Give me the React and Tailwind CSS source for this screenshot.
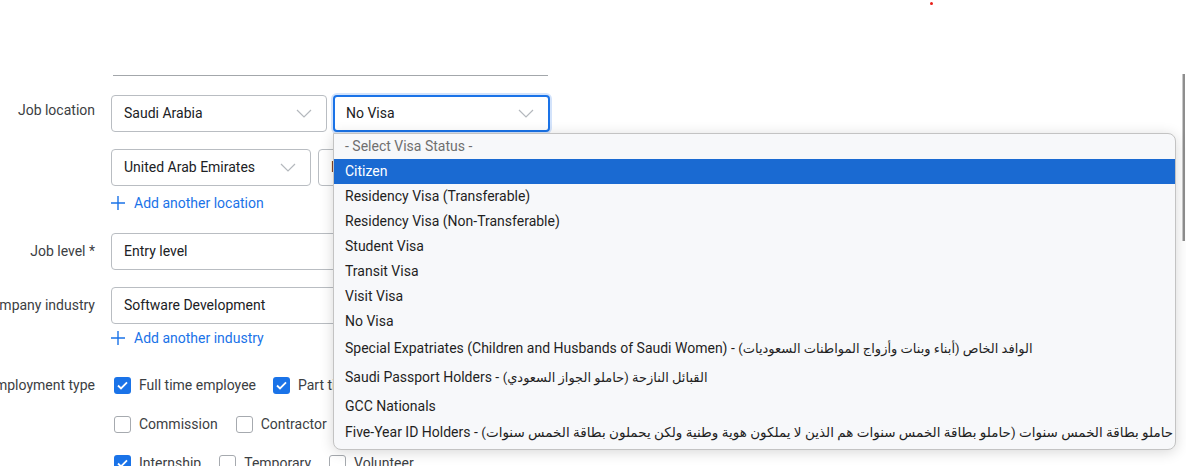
import React from "react";

function Chevron() {
  return (
    <svg width="16" height="9" viewBox="0 0 16 9" fill="none" className="shrink-0">
      <path d="M1 1l7 7 7-7" stroke="#b4b8bd" strokeWidth="1.2" />
    </svg>
  );
}

function Select({ value, w, focused }) {
  return (
    <div
      className={
        "h-[37px] flex items-center justify-between pl-3 pr-[14px] rounded-[4px] bg-white " +
        (focused
          ? "border-2 border-[#1a73e8] ring-2 ring-[#d3e3fb] pl-[11px] pr-[13px] bg-[#fafbfd]"
          : "border border-[#b9bdc2]")
      }
      style={{ width: w }}
    >
      <span className="text-[14px] text-[#202124] whitespace-nowrap">{value}</span>
      <Chevron />
    </div>
  );
}

function Input({ value }) {
  return (
    <div className="h-[37px] w-[437px] flex items-center pl-3 rounded-[4px] border border-[#b9bdc2] bg-white">
      <span className="text-[14px] text-[#202124]">{value}</span>
    </div>
  );
}

function Plus() {
  return (
    <svg width="14" height="14" viewBox="0 0 14 14" className="shrink-0">
      <path d="M7 0v14M0 7h14" stroke="#1a73e8" strokeWidth="1.4" />
    </svg>
  );
}

function AddLink({ text }) {
  return (
    <div className="flex items-center gap-[9px] h-5 text-[14px] text-[#1a73e8]">
      <Plus />
      <span>{text}</span>
    </div>
  );
}

function Checkbox({ checked, label }) {
  return (
    <div className="flex items-center gap-2">
      {checked ? (
        <div className="w-[17px] h-[17px] rounded-[3px] bg-[#1a73e8] flex items-center justify-center">
          <svg width="11" height="9" viewBox="0 0 11 9">
            <path d="M1 4.5l3 3L10 1.3" stroke="white" strokeWidth="1.8" fill="none" />
          </svg>
        </div>
      ) : (
        <div className="w-[17px] h-[17px] rounded-[3px] border border-[#a6aaaf] bg-white" />
      )}
      <span className="text-[14px] text-[#3c4043] whitespace-nowrap">{label}</span>
    </div>
  );
}

function Label({ children, className = "" }) {
  return (
    <div className={"w-[95px] shrink-0 flex justify-end " + className}>
      <span className="whitespace-nowrap text-[14px] text-[#3c4043]">{children}</span>
    </div>
  );
}

const options = [
  { t: "Citizen", sel: true },
  { t: "Residency Visa (Transferable)" },
  { t: "Residency Visa (Non-Transferable)" },
  { t: "Student Visa" },
  { t: "Transit Visa" },
  { t: "Visit Visa" },
  { t: "No Visa" },
];

export default function App() {
  return (
    <div className="relative w-[1186px] h-[466px] overflow-hidden bg-white font-['Roboto','DejaVu_Sans',sans-serif]">
      {/* red dot */}
      <div className="absolute left-[930px] top-[2px] w-[3px] h-[3px] rounded-full bg-[#e8201a]" />
      {/* scrollbar */}
      <div className="absolute left-[1182px] top-[74px] w-[3px] h-[167px] bg-[#8e8e8e] border-l border-[#c8c8c8]" />

      <div className="ml-[113px] w-[435px] h-[76px] border-b border-[#a3a7ab]" />

      {/* Job location */}
      <div className="flex gap-4 mt-[19px]">
        <Label className="pt-[5px]">Job location</Label>
        <div className="flex flex-col">
          <div className="flex gap-[6px]">
            <Select value="Saudi Arabia" w={216} />
            <Select value="No Visa" w={217} focused />
          </div>
          <div className="flex gap-[7px] mt-[17px]">
            <Select value="United Arab Emirates" w={200} />
            <Select value="No Visa" w={217} />
          </div>
          <div className="mt-[7px]">
            <AddLink text="Add another location" />
          </div>
        </div>
      </div>

      {/* Job level */}
      <div className="flex gap-4 items-center mt-5">
        <Label>Job level *</Label>
        <Input value="Entry level" />
      </div>

      {/* Company industry */}
      <div className="flex gap-4 mt-[17px]">
        <Label className="pt-[8px]">Company industry</Label>
        <div className="flex flex-col">
          <Input value="Software Development" />
          <div className="mt-1">
            <AddLink text="Add another industry" />
          </div>
        </div>
      </div>

      {/* Employment type */}
      <div className="flex gap-4 mt-[27px]">
        <Label className="pt-0">Employment type</Label>
        <div className="flex flex-col pl-[3px] gap-[18px]">
          <div className="flex gap-[17px]">
            <Checkbox checked label="Full time employee" />
            <Checkbox checked label="Part time employee" />
          </div>
          <div className="flex gap-[18px]">
            <Checkbox label="Commission" />
            <Checkbox label="Contractor" />
          </div>
          <div className="flex gap-[18px]">
            <Checkbox checked label="Internship" />
            <Checkbox label="Temporary" />
            <Checkbox label="Volunteer" />
          </div>
        </div>
      </div>

      {/* Dropdown overlay */}
      <div className="absolute left-[333px] top-[133px] w-[843px] h-[317px] bg-[#f7f8fa] border border-[#c3c3c3] rounded-b-[8px] rounded-tr-[8px] shadow-[0_2px_14px_rgba(0,0,0,0.16)] overflow-hidden text-[14px] text-[#1f1f1f]">
        <div className="h-[25px] flex items-center px-[11px] text-[#6f6f6f] whitespace-nowrap">- Select Visa Status -</div>
        {options.map((o) => (
          <div
            key={o.t}
            className={
              "h-[25px] flex items-center px-[11px] whitespace-nowrap " +
              (o.sel ? "bg-[#1a6ad2] text-white" : "")
            }
          >
            {o.t}
          </div>
        ))}
        <div className="h-[28px] flex items-center px-[11px] whitespace-nowrap">
          <span>
            Special Expatriates (Children and Husbands of Saudi Women) - <span className="text-[13px]">الوافد الخاص (أبناء وبنات وأزواج المواطنات السعوديات)</span>
          </span>
        </div>
        <div className="h-[31px] flex items-center px-[11px] whitespace-nowrap">
          <span>
            Saudi Passport Holders - <span className="text-[13px]">القبائل النازحة (حاملو الجواز السعودي)</span>
          </span>
        </div>
        <div className="h-[26px] flex items-center px-[11px] whitespace-nowrap">GCC Nationals</div>
        <div className="h-[27px] flex items-center px-[11px] whitespace-nowrap">
          <span>
            Five-Year ID Holders - <span className="text-[13.5px]">حاملو بطاقة الخمس سنوات (حاملو بطاقة الخمس سنوات هم الذين لا يملكون هوية وطنية ولكن يحملون بطاقة الخمس سنوات)</span>
          </span>
        </div>
      </div>
    </div>
  );
}
